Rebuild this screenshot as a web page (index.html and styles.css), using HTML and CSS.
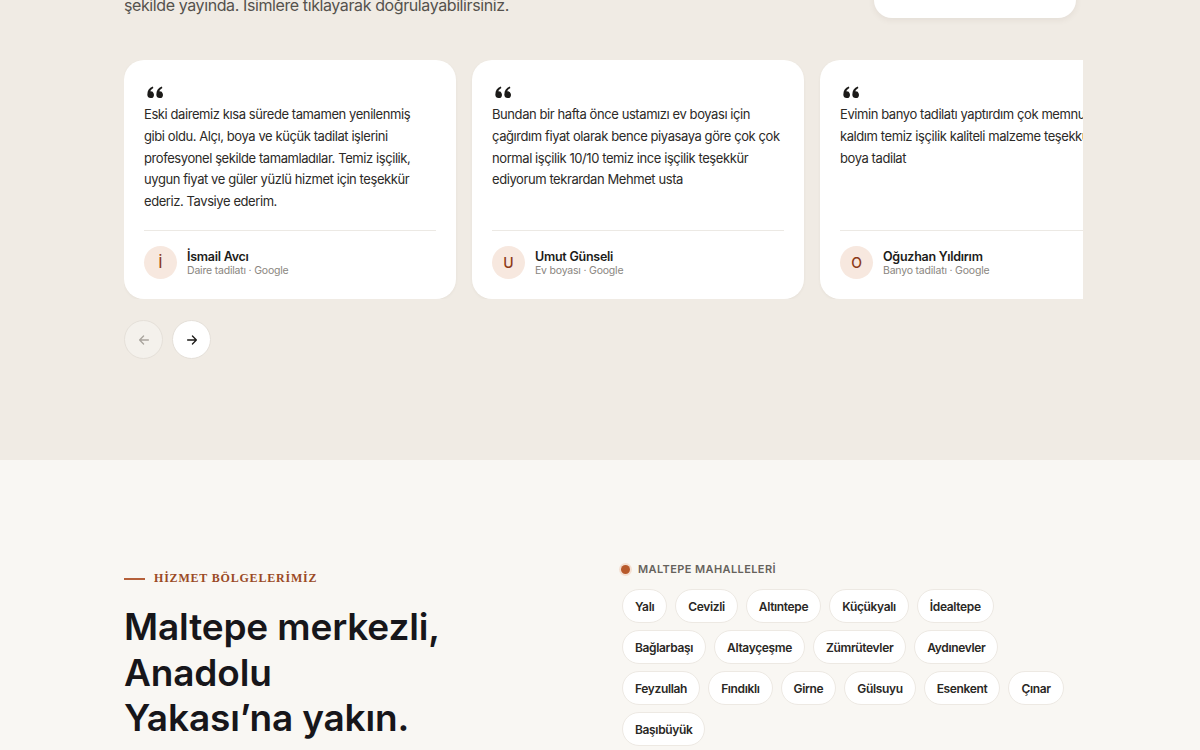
FILE: index.html
```html
<!DOCTYPE html>
<html lang="tr">
<head>
    <meta charset="UTF-8">
    <meta name="viewport" content="width=device-width, initial-scale=1.0">
    <title>Yorumlar ve Hizmet Bölgeleri</title>
    <link rel="stylesheet" href="styles.css">
</head>
<body>
    <section class="reviews">
        <div class="container">
            <div class="reviews-head">
                <p class="lead">şekilde yayında. İsimlere tıklayarak doğrulayabilirsiniz.</p>
                <div class="rating-card"></div>
            </div>

            <div class="slider">
                <div class="track">
                    <article class="review">
                        <svg class="quote" viewBox="0 0 17 12" width="17" height="12">
                            <path d="M3.6 12a3.3 3.3 0 1 1 3.2-4.2c.5 1.6-.1 3.2-1 3.9-.6.3-1.3.3-2.2.3zM.4 8.2C.3 5 2.2 1.9 5.8.6l.6 1.3C4.3 3 3.2 4.6 3.2 6.2z"/>
                            <path d="M12.6 12a3.3 3.3 0 1 1 3.2-4.2c.5 1.6-.1 3.2-1 3.9-.6.3-1.3.3-2.2.3zM9.4 8.2C9.3 5 11.2 1.9 14.8.6l.6 1.3C13.3 3 12.2 4.6 12.2 6.2z"/>
                        </svg>
                        <p class="review-text">Eski dairemiz kısa sürede tamamen yenilenmiş gibi oldu. Alçı, boya ve küçük tadilat işlerini profesyonel şekilde tamamladılar. Temiz işçilik, uygun fiyat ve güler yüzlü hizmet için teşekkür ederiz. Tavsiye ederim.</p>
                        <div class="author">
                            <span class="avatar">İ</span>
                            <div>
                                <div class="author-name">İsmail Avcı</div>
                                <div class="author-meta">Daire tadilatı · Google</div>
                            </div>
                        </div>
                    </article>

                    <article class="review">
                        <svg class="quote" viewBox="0 0 17 12" width="17" height="12">
                            <path d="M3.6 12a3.3 3.3 0 1 1 3.2-4.2c.5 1.6-.1 3.2-1 3.9-.6.3-1.3.3-2.2.3zM.4 8.2C.3 5 2.2 1.9 5.8.6l.6 1.3C4.3 3 3.2 4.6 3.2 6.2z"/>
                            <path d="M12.6 12a3.3 3.3 0 1 1 3.2-4.2c.5 1.6-.1 3.2-1 3.9-.6.3-1.3.3-2.2.3zM9.4 8.2C9.3 5 11.2 1.9 14.8.6l.6 1.3C13.3 3 12.2 4.6 12.2 6.2z"/>
                        </svg>
                        <p class="review-text">Bundan bir hafta önce ustamızı ev boyası için çağırdım fiyat olarak bence piyasaya göre çok çok normal işçilik 10/10 temiz ince işçilik teşekkür ediyorum tekrardan Mehmet usta</p>
                        <div class="author">
                            <span class="avatar">U</span>
                            <div>
                                <div class="author-name">Umut Günseli</div>
                                <div class="author-meta">Ev boyası · Google</div>
                            </div>
                        </div>
                    </article>

                    <article class="review">
                        <svg class="quote" viewBox="0 0 17 12" width="17" height="12">
                            <path d="M3.6 12a3.3 3.3 0 1 1 3.2-4.2c.5 1.6-.1 3.2-1 3.9-.6.3-1.3.3-2.2.3zM.4 8.2C.3 5 2.2 1.9 5.8.6l.6 1.3C4.3 3 3.2 4.6 3.2 6.2z"/>
                            <path d="M12.6 12a3.3 3.3 0 1 1 3.2-4.2c.5 1.6-.1 3.2-1 3.9-.6.3-1.3.3-2.2.3zM9.4 8.2C9.3 5 11.2 1.9 14.8.6l.6 1.3C13.3 3 12.2 4.6 12.2 6.2z"/>
                        </svg>
                        <p class="review-text">Evimin banyo tadilatı yaptırdım çok memnun kaldım temiz işçilik kaliteli malzeme teşekkürler ulu boya tadilat</p>
                        <div class="author">
                            <span class="avatar">O</span>
                            <div>
                                <div class="author-name">Oğuzhan Yıldırım</div>
                                <div class="author-meta">Banyo tadilatı · Google</div>
                            </div>
                        </div>
                    </article>
                </div>
            </div>

            <div class="slider-nav">
                <button class="nav-btn prev" aria-label="Önceki">
                    <svg viewBox="0 0 16 16" width="14" height="14"><path d="M13 8H3M7.5 3.5 3 8l4.5 4.5"/></svg>
                </button>
                <button class="nav-btn next" aria-label="Sonraki">
                    <svg viewBox="0 0 16 16" width="14" height="14"><path d="M3 8h10M8.5 3.5 13 8l-4.5 4.5"/></svg>
                </button>
            </div>
        </div>
    </section>

    <section class="areas">
        <div class="container areas-grid">
            <div class="areas-intro">
                <div class="eyebrow"><span class="eyebrow-line"></span>HİZMET BÖLGELERİMİZ</div>
                <h2>Maltepe merkezli,<br>Anadolu<br>Yakası’na yakın.</h2>
            </div>
            <div class="areas-list">
                <div class="list-label"><span class="dot"></span>MALTEPE MAHALLELERİ</div>
                <ul class="chips">
                    <li>Yalı</li>
                    <li>Cevizli</li>
                    <li>Altıntepe</li>
                    <li>Küçükyalı</li>
                    <li>İdealtepe</li>
                    <li>Bağlarbaşı</li>
                    <li>Altayçeşme</li>
                    <li>Zümrütevler</li>
                    <li>Aydınevler</li>
                    <li>Feyzullah</li>
                    <li>Fındıklı</li>
                    <li>Girne</li>
                    <li>Gülsuyu</li>
                    <li>Esenkent</li>
                    <li>Çınar</li>
                    <li>Başıbüyük</li>
                </ul>
            </div>
        </div>
    </section>
</body>
</html>
```

FILE: styles.css
```css
* {
    box-sizing: border-box;
    margin: 0;
    padding: 0;
}

body {
    font-family: Inter, "Noto Sans", sans-serif;
    color: #1c1b19;
    background: #f9f7f3;
}

.container {
    width: 952px;
    margin: 0 auto;
}

/* Reviews */

.reviews {
    background: #f0ebe4;
    padding-bottom: 101px;
}

.reviews-head {
    display: flex;
    justify-content: space-between;
    align-items: flex-end;
    margin-top: -10px;
}

.lead {
    font-size: 16px;
    line-height: 26px;
    color: #55524d;
    letter-spacing: -0.4px;
}

.rating-card {
    width: 202px;
    height: 60px;
    margin-top: -32px;
    background: #fff;
    border-radius: 0 0 18px 18px;
    box-shadow: 0 2px 6px rgba(90, 70, 50, 0.08);
}

.slider {
    margin-top: 42px;
    margin-right: -7px;
    overflow: hidden;
}

.track {
    display: flex;
    gap: 16px;
}

.review {
    flex: 0 0 332px;
    min-height: 239px;
    display: flex;
    flex-direction: column;
    background: #fff;
    border-radius: 20px;
    padding: 26px 20px 20px;
    box-shadow: 0 1px 3px rgba(90, 70, 50, 0.06);
}

.quote {
    fill: #1c1b19;
    margin-left: 3px;
}

.review-text {
    max-width: 289px;
    margin-top: 6px;
    margin-bottom: 17px;
    font-size: 13px;
    line-height: 21.8px;
    color: #2c2a27;
    letter-spacing: -0.42px;
}

.author {
    margin-top: auto;
    display: flex;
    align-items: center;
    gap: 10px;
    border-top: 1px solid #ece9e4;
    padding-top: 15px;
}

.avatar {
    width: 33px;
    height: 33px;
    border-radius: 50%;
    background: #f7e8df;
    color: #8c3a18;
    display: flex;
    align-items: center;
    justify-content: center;
    font-size: 14px;
    font-weight: 500;
}

.author-name {
    font-size: 12.5px;
    font-weight: 600;
    color: #1c1b19;
    line-height: 15px;
    letter-spacing: -0.25px;
}

.author-meta {
    font-size: 10.5px;
    color: #8a8680;
    line-height: 13px;
    letter-spacing: -0.2px;
}

.slider-nav {
    display: flex;
    gap: 9px;
    margin-top: 21px;
}

.nav-btn {
    width: 39px;
    height: 39px;
    border-radius: 50%;
    border: 1px solid #e5e0d9;
    background: #fff;
    display: flex;
    align-items: center;
    justify-content: center;
    cursor: pointer;
}

.nav-btn svg {
    fill: none;
    stroke: #1c1b19;
    stroke-width: 1.5;
    stroke-linecap: round;
    stroke-linejoin: round;
}

.nav-btn.prev {
    background: #f4f1ec;
}

.nav-btn.prev svg {
    stroke: #a9a49d;
}

/* Service areas */

.areas {
    padding-top: 102px;
    padding-bottom: 80px;
}

.areas-grid {
    display: grid;
    grid-template-columns: 1fr 1fr;
    gap: 40px;
}

.areas-intro {
    padding-top: 9px;
}

.eyebrow {
    display: flex;
    align-items: center;
    gap: 9px;
    font-family: "Liberation Serif", "DejaVu Serif", serif;
    font-size: 12px;
    font-weight: 700;
    letter-spacing: 0.8px;
    color: #9b4a25;
}

.eyebrow-line {
    width: 21px;
    height: 2px;
    background: #b5603a;
}

.areas-intro h2 {
    margin-top: 18px;
    font-size: 37px;
    line-height: 45.5px;
    font-weight: 600;
    letter-spacing: -0.15px;
    color: #17161a;
}

.list-label {
    display: flex;
    align-items: center;
    gap: 8px;
    padding-left: 1px;
    font-size: 11px;
    font-weight: 600;
    letter-spacing: 0.4px;
    color: #66625c;
}

.dot {
    width: 9px;
    height: 9px;
    border-radius: 50%;
    background: #b85a2c;
    box-shadow: 0 0 0 2px #f4dfd2;
}

.chips {
    list-style: none;
    display: flex;
    flex-wrap: wrap;
    gap: 7px 8px;
    margin-top: 13px;
    padding-left: 2px;
}

.chips li {
    height: 34px;
    padding: 0 12px;
    display: flex;
    align-items: center;
    background: #fff;
    border: 1px solid #ede9e3;
    border-radius: 17px;
    font-size: 12px;
    font-weight: 600;
    letter-spacing: -0.35px;
    color: #2a2825;
}
```
